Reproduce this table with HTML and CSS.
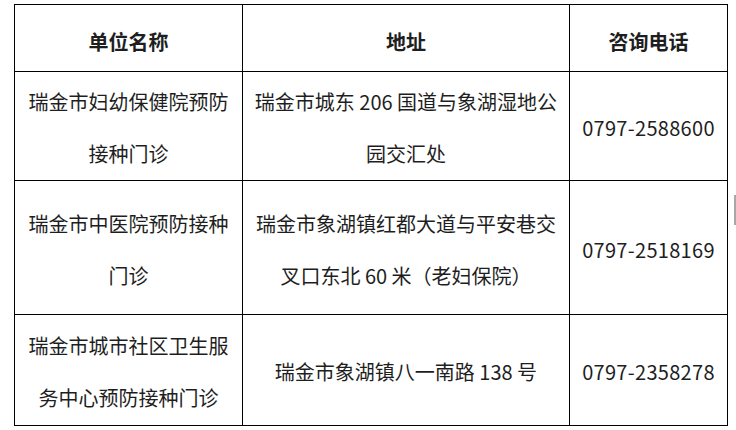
FILE: index.html
```html
<!DOCTYPE html>
<html lang="zh-CN">
<head>
<meta charset="utf-8">
<title>预防接种门诊</title>
<link rel="stylesheet" href="styles.css">
</head>
<body>
<div class="page">
  <table class="clinics">
    <colgroup>
      <col class="c-name">
      <col class="c-addr">
      <col class="c-tel">
    </colgroup>
    <thead>
      <tr class="r-head">
        <th>单位名称</th>
        <th>地址</th>
        <th>咨询电话</th>
      </tr>
    </thead>
    <tbody>
      <tr class="r1">
        <td>瑞金市妇幼保健院预防<br>接种门诊</td>
        <td>瑞金市城东 206 国道与象湖湿地公<br>园交汇处</td>
        <td>0797-2588600</td>
      </tr>
      <tr class="r2">
        <td>瑞金市中医院预防接种<br>门诊</td>
        <td>瑞金市象湖镇红都大道与平安巷交<br>叉口东北 60 米（老妇保院）</td>
        <td>0797-2518169</td>
      </tr>
      <tr class="r3">
        <td>瑞金市城市社区卫生服<br>务中心预防接种门诊</td>
        <td>瑞金市象湖镇八一南路 138 号</td>
        <td>0797-2358278</td>
      </tr>
    </tbody>
  </table>
  <div class="edge-mark"></div>
</div>
</body>
</html>
```

FILE: styles.css
```css
html, body {
  margin: 0;
  padding: 0;
  background: #ffffff;
}

.page {
  position: relative;
  width: 736px;
  height: 430px;
  overflow: hidden;
  padding: 4px 0 0 14px;
  box-sizing: border-box;
  font-family: "Noto Sans CJK SC", "Microsoft YaHei", "Noto Sans", sans-serif;
  color: #1e1e1e;
}

.clinics {
  border-collapse: collapse;
  table-layout: fixed;
  width: 713px;
}

.c-name { width: 228px; }
.c-addr { width: 327px; }
.c-tel { width: 158px; }

.clinics th,
.clinics td {
  border: 1px solid #000;
  text-align: center;
  vertical-align: middle;
  padding: 4px 6px 0;
  font-size: 20px;
  line-height: 52px;
  white-space: nowrap;
}

.clinics th {
  font-weight: bold;
  padding-top: 8px;
  line-height: 30px;
}

.r-head { height: 67px; }
.r1 { height: 109px; }
.r2 { height: 134px; }
.r3 { height: 111px; }

.clinics td:last-child {
  letter-spacing: 0.3px;
}

.edge-mark {
  position: absolute;
  left: 734px;
  top: 195px;
  width: 2px;
  height: 30px;
  background: #a8a8a8;
}
```
